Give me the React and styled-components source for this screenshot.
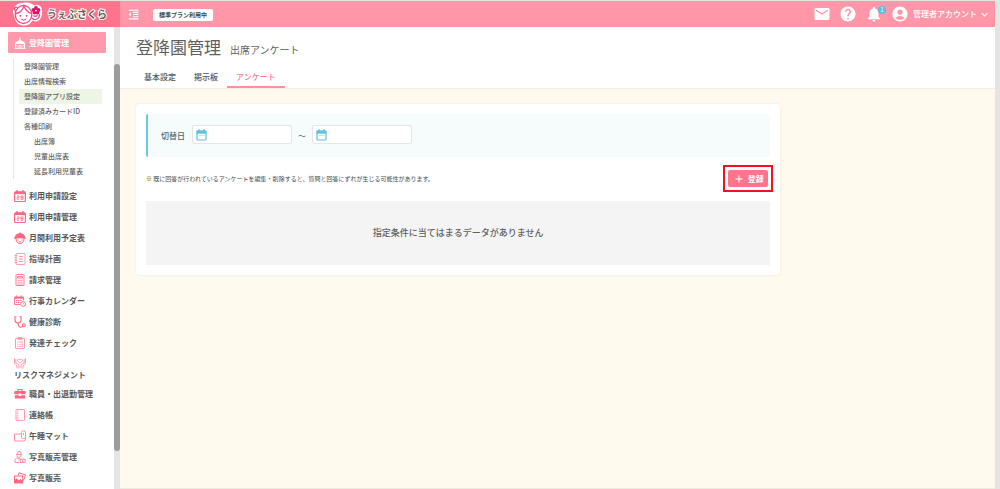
import React from "react";
import styled, { createGlobalStyle, css } from "styled-components";
import {
  MdEmail,
  MdHelp,
  MdNotifications,
  MdAccountCircle,
  MdExpandMore,
  MdFormatIndentDecrease,
  MdAdd,
} from "react-icons/md";

const GlobalStyle = createGlobalStyle`
  *, *::before, *::after { box-sizing: border-box; }
  body {
    margin: 0;
    background: #fffaed;
    color: #5f5f5f;
    font-family: "Noto Sans CJK JP", "Noto Sans", sans-serif;
    font-size: 8px;
    line-height: 12px;
  }
  button, input { font: inherit; color: inherit; }
  a { color: inherit; text-decoration: none; }
  ul { list-style: none; margin: 0; padding: 0; }
  svg { display: block; flex: none; }
`;

const Page = styled.div`
  display: grid;
  grid-template-columns: 120px minmax(0, 1fr);
  grid-template-rows: 26px minmax(0, 1fr);
  height: 100vh;
  border-top: 1px solid #e4e4e4;
  border-right: 5px solid #e4e4e4;
`;

const Brand = styled.a`
  display: flex;
  align-items: center;
  gap: 4px;
  padding-left: 12px;
  background: #ff748d;
`;

const BrandName = styled.span`
  position: relative;
  color: #6b5d5b;
  font-size: 10px;
  font-weight: 700;
  line-height: 16px;
  white-space: nowrap;
  -webkit-text-stroke: 2px #fff;
  paint-order: stroke fill;
`;

const Leaf = styled.span`
  position: absolute;
  top: 3px;
  left: 27px;
  width: 3px;
  height: 3px;
  border-radius: 3px 0;
  background: #8fd14a;
`;

const TopBar = styled.header`
  display: flex;
  align-items: center;
  padding: 0 4px 0 7px;
  background: #ff97a9;
  color: #fff;
`;

const IconButton = styled.button`
  position: relative;
  display: flex;
  padding: 0;
  border: 0;
  background: none;
  color: #fff;
`;

const PlanBadge = styled.span`
  width: 60px;
  margin: 1px 0 0 13px;
  border-radius: 2px;
  background: #fff;
  color: #444;
  font-size: 6px;
  font-weight: 700;
  text-align: center;
`;

const TopActions = styled.div`
  display: flex;
  align-items: center;
  gap: 8px;
  margin-left: auto;
`;

const Count = styled.span`
  position: absolute;
  top: 1px;
  right: -3px;
  width: 8px;
  height: 8px;
  border-radius: 50%;
  background: #55c1e2;
  font-size: 6px;
  line-height: 8px;
  text-align: center;
`;

const Account = styled(IconButton)`
  align-items: center;
  gap: 4px;
  font-weight: 500;
`;

const AccountLabel = styled.span`
  display: flex;
  align-items: center;
  gap: 1px;
`;

const Sidebar = styled.aside`
  display: flex;
  min-height: 0;
  background: #fff;
`;

const SideScroll = styled.nav`
  flex: 1;
  min-width: 0;
  overflow: hidden;
  padding: 5px 8px 0;
`;

const Track = styled.div`
  width: 6px;
  padding-top: 37px;
  background: #e5e5e5;
`;

const Thumb = styled.div`
  height: 91%;
  border-radius: 3px;
  background: #9c9c9c;
`;

const ActiveSection = styled.a`
  display: flex;
  align-items: center;
  gap: 3px;
  height: 21px;
  padding-left: 6px;
  border-radius: 1px;
  background: #ff9aac;
  color: #fff;
  font-weight: 700;
`;

const SubMenu = styled.ul`
  margin: 6px 4px 6px 5px;
  padding-left: 5px;
  border-left: 1px solid #e4e4e4;
`;

const SubLink = styled.a`
  display: block;
  padding-left: ${(p) => (p.$nested ? 15 : 5)}px;
  background: ${(p) => (p.$current ? "#eef5e4" : "transparent")};
  font-size: 7px;
  font-weight: 500;
  line-height: 15px;
  white-space: nowrap;
`;

const NavLink = styled.a`
  display: flex;
  align-items: center;
  gap: 3px;
  height: 21px;
  padding-left: 6px;
  color: #585858;
  font-weight: 700;
  white-space: nowrap;

  ${(p) =>
    p.$stacked &&
    css`
      flex-direction: column;
      align-items: flex-start;
      gap: 0;
      height: 30px;
      padding-top: 4px;
    `}
`;

const Main = styled.main`
  display: flex;
  flex-direction: column;
  min-width: 0;
`;

const PageHead = styled.div`
  padding: 8px 15px 0;
  border-bottom: 1px solid #f0ede6;
  background: #fff;
`;

const Titles = styled.div`
  display: flex;
  align-items: baseline;
  gap: 9px;
  padding-left: 1px;
`;

const Title = styled.h1`
  margin: 0;
  font-size: 17px;
  font-weight: 400;
  line-height: 24px;
`;

const Subtitle = styled.h2`
  margin: 0;
  font-size: 10px;
  font-weight: 400;
  line-height: 24px;
`;

const Tabs = styled.nav`
  display: flex;
  margin-top: 5px;
`;

const Tab = styled.a`
  padding: 4px 9px 3px;
  border-bottom: 2px solid ${(p) => (p.$current ? "#ff8fa2" : "transparent")};
  color: ${(p) => (p.$current ? "#ff7a92" : "#555")};
  font-weight: 500;
`;

const Content = styled.div`
  flex: 1;
  padding: 15px 0 0 16px;
  border-bottom: 1px solid #efebdf;
`;

const Card = styled.section`
  width: 75%;
  padding: 10px;
  border-radius: 3px;
  background: #fff;
  box-shadow: 0 0 2px rgba(90, 80, 50, 0.16);
`;

const Filter = styled.form`
  display: flex;
  align-items: center;
  height: 43px;
  padding: 0 13px 2px;
  border-left: 2px solid #6cc6de;
  border-radius: 2px;
  background: #f6fcfc;
  color: #4d6a70;
`;

const FilterLabel = styled.label`
  padding: 3px 7px 0 0;
  font-weight: 500;
`;

const Tilde = styled.span`
  padding: 3px 6px 0;
`;

const DateBox = styled.span`
  display: flex;
  align-items: center;
  gap: 4px;
  width: 100px;
  height: 19px;
  padding: 0 3px;
  border: 1px solid #e2e6e6;
  border-radius: 2px;
  background: #fff;
`;

const DateInput = styled.input`
  flex: 1;
  min-width: 0;
  padding: 0;
  border: 0;
  outline: 0;
  background: transparent;
`;

const ActionRow = styled.div`
  display: flex;
  align-items: center;
  justify-content: space-between;
  margin-right: -3px;
  padding: 8px 0 9px;
`;

const Note = styled.p`
  margin: 0;
  color: #4a4a4a;
  font-size: 6px;
`;

const Highlight = styled.div`
  padding: 3px;
  border: 2px solid #f5101c;
`;

const RegisterButton = styled.button`
  display: flex;
  align-items: center;
  justify-content: center;
  gap: 3px;
  width: 40px;
  height: 17px;
  padding: 0;
  border: 0;
  border-radius: 2px;
  background: #ff748d;
  color: #fff;
  font-weight: 700;
`;

const Empty = styled.p`
  margin: 0;
  padding: 26px 0;
  background: #f4f4f4;
  font-size: 9px;
  font-weight: 500;
  text-align: center;
`;

const PINK = "#ff6681";
const SOFT = "#ff8fa2";

function LogoMark() {
  return (
    <svg width="31" height="24" viewBox="0 0 31 24" aria-hidden="true">
      <path
        d="M11 1C5 1 2.500 4 2.500 6.500C.5 8 .5 11 2 13C3 20 6.500 23.500 11.500 23.500C16 23.500 19 21.500 20.500 18.500C25 21 29.500 18 30 12C31 5 27 1 22.500 3.500C19 1 15 0 11 1Z"
        fill="#fff"
      />
      <g fill="none" stroke="#ee4f8b" strokeWidth="1.300">
        <ellipse cx="11.500" cy="12.500" rx="8.300" ry="9" />
        <path d="M3.800 11.500C8 11 10.500 8.500 12 4C13.500 8.500 16 10.500 19.300 11.500" />
        <path d="M5.500 5.500C2.500 4 1.500 8 4 9" />
        <path d="M20 16C23 19.500 28 16.500 27.500 12M21 13.500Q23.500 15.500 25.500 13" />
      </g>
      <circle cx="8.300" cy="13.800" r=".9" fill="#e0357a" />
      <circle cx="14.700" cy="13.800" r=".9" fill="#e0357a" />
      <path d="M8.800 17Q11.500 19.500 14.200 17" fill="none" stroke="#e0357a" strokeWidth="1" />
      <g fill="#dc1463">
        <circle cx="24" cy="6" r="1.900" />
        <circle cx="26.500" cy="8" r="1.900" />
        <circle cx="25.500" cy="10.600" r="1.900" />
        <circle cx="22.500" cy="10.600" r="1.900" />
        <circle cx="21.500" cy="8" r="1.900" />
      </g>
      <circle cx="24" cy="8.700" r=".7" fill="#ffd2e0" />
    </svg>
  );
}

const drawings = {
  school: (
    <g fill="none" stroke="#fff" strokeWidth="1">
      <path d="M1.500 11V6.500H10.500V11M.5 11.300H11.500M5 11V8.500H7V11" />
      <path d="M.3 6.300L6 2.500L11.700 6.300Z" fill="#fff" stroke="none" />
      <path d="M6 .3V3M3 8V9.500M9 8V9.500" />
    </g>
  ),
  calendar28: (
    <g fill="none" stroke={PINK}>
      <rect x=".6" y="1.800" width="10.800" height="9.700" rx="1" strokeWidth="1.200" />
      <path d="M.6 3H11.400" strokeWidth="2.200" />
      <path d="M3 0V3M9 0V3" strokeWidth="1.400" />
      <path d="M3 6H5V7.600H3.300V9.300H5.300M7 6H9V9.300H7ZM7 7.600H9" strokeWidth=".8" />
    </g>
  ),
  child: (
    <g>
      <path d="M2 6.500C2 10 4 11.500 6 11.500S10 10 10 6.500" fill="#fff" stroke={PINK} strokeWidth="1" />
      <path d="M.2 7C.5 3.500 3 1.300 5 1.200L6 .2L7 1.200C9 1.300 11.500 3.500 11.800 7Q6 5.500 .2 7Z" fill={PINK} />
      <path d="M4 7.500V8.700M8 7.500V8.700M4.800 9.800H7.200" stroke={PINK} strokeWidth=".9" />
    </g>
  ),
  notebook: (
    <g fill="none" stroke={SOFT} strokeWidth=".9">
      <rect x="2" y=".5" width="9" height="11" rx="1" />
      <path d="M.5 2.500H3M.5 4.800H3M.5 7.200H3M.5 9.500H3M5 3.500H9M5 6H9M5 8.500H9" />
    </g>
  ),
  calculator: (
    <g fill="none" stroke={PINK} strokeWidth=".9">
      <rect x="2" y=".5" width="8" height="11" rx=".5" />
      <path d="M3.500 2.500H8.500V4H3.500Z" />
      <path d="M3.500 6.300H8.700M3.500 8.200H8.700M3.500 10H8.700" strokeDasharray="1.300 .6" />
    </g>
  ),
  calendarClock: (
    <g fill="none" stroke={PINK} strokeWidth=".9">
      <path d="M6.500 9.500H.6V2H9.500V5.500" />
      <path d="M.6 2.800H9.500" strokeWidth="1.800" />
      <path d="M2.700 .3V2M7.300 .3V2" />
      <path d="M2 5.500H8M2 7.500H6.500" strokeDasharray="1.400 .5" />
      <circle cx="9.200" cy="9" r="2.400" fill="#fff" />
      <path d="M9.200 7.600V9H10.300" strokeWidth=".7" />
    </g>
  ),
  stethoscope: (
    <g fill="none" stroke={PINK} strokeWidth="1.100">
      <path d="M2.500 .8H1V4C1 8 7 8 7 4V.8H5.500M4 7C4 12.500 9 12 8.500 9.500" />
      <circle cx="9.800" cy="9.200" r="1.500" />
    </g>
  ),
  checklist: (
    <g fill="none" stroke={SOFT} strokeWidth=".9">
      <rect x="1.500" y="1.500" width="9" height="10" rx=".5" />
      <path d="M4 .5H8V2.500H4ZM3.200 5H4.500M5.500 5H9M3.200 7.200H4.500M5.500 7.200H9M3.200 9.400H4.500M5.500 9.400H9" />
    </g>
  ),
  hands: (
    <g fill="none" stroke={SOFT} strokeWidth=".9">
      <path d="M6 6.300L3.700 4C3 2.500 5 1.500 6 3C7 1.500 9 2.500 8.300 4Z" />
      <path d="M.5 1.500V6L3 9V11.500M1.800 2V5.500L5 8V11.500M11.500 1.500V6L9 9V11.500M10.200 2V5.500L7 8V11.500" />
    </g>
  ),
  briefcase: (
    <g>
      <path d="M4 3V1.500H8V3" fill="none" stroke={PINK} strokeWidth="1.200" />
      <path d="M1 3H11Q11.700 3 11.700 4V6.300H7.200V5.500H4.800V6.300H.3V4Q.3 3 1 3ZM.8 7.200H4.800V8H7.200V7.200H11.200V10.500H.8Z" fill={PINK} />
    </g>
  ),
  book: (
    <g fill="none" stroke={SOFT} strokeWidth=".9">
      <rect x="2" y=".5" width="8.500" height="11" rx=".7" />
      <path d="M3.800 .5V11.500" strokeDasharray="1.200 .6" />
    </g>
  ),
  mat: (
    <g fill="none" stroke={SOFT} strokeWidth="1">
      <path d="M7.500 4H.5V11H9.500Q11.500 11 11.500 9V2.500Q11.500 .8 9.500 .8T7.500 2.500V7.500Q7.500 8.500 9.500 8.500T11.500 7.500" />
      <path d="M9.500 3V5" />
    </g>
  ),
  photographer: (
    <g fill="none" stroke={SOFT} strokeWidth="1">
      <path d="M2 3.500H8M3 3.300L4 .6H6.500L7.200 3.300M3 4V5.500Q5 7.500 7 5.500V4M1 11.500V8.500Q2 6.800 4 7L5 8.500L6.500 7M1 11.500H5" />
      <rect x="6.300" y="8.300" width="4.800" height="3.200" />
      <circle cx="8.700" cy="9.900" r=".6" />
    </g>
  ),
  photos: (
    <g fill="none" stroke={PINK} strokeWidth="1">
      <path d="M4 3.500L5 .8L11.500 3L9.500 8.500" />
      <rect x=".5" y="4" width="8.200" height="7" fill="#fff" />
      <path d="M1 10.500V8.500L3 6.800L5 8.800L6.500 7.500L8.500 9.500V10.500Z" fill={PINK} />
    </g>
  ),
};

function NavIcon({ name }) {
  return (
    <svg width="12" height="12" viewBox="0 0 12 12" aria-hidden="true">
      {drawings[name]}
    </svg>
  );
}

function DateIcon() {
  return (
    <svg width="11" height="12" viewBox="0 0 11 12" aria-hidden="true">
      <path d="M3 .3V3M8 .3V3" stroke="#62c2dc" strokeWidth="1.500" />
      <rect x="1" y="2" width="9" height="9" rx="1" fill="#fff" stroke="#62c2dc" strokeWidth="1.200" />
      <path d="M.5 3.200H10.500" stroke="#62c2dc" strokeWidth="3" />
      <path d="M2.500 6.500H8.500" stroke="#a6dcea" strokeWidth=".7" />
    </svg>
  );
}

const subItems = [
  { label: "登降園管理" },
  { label: "出席情報検索" },
  { label: "登降園アプリ設定", current: true },
  { label: "登録済みカードID" },
  { label: "各種印刷" },
  { label: "出席簿", nested: true },
  { label: "児童出席表", nested: true },
  { label: "延長利用児童表", nested: true },
];

const navItems = [
  { label: "利用申請設定", icon: "calendar28" },
  { label: "利用申請管理", icon: "calendar28" },
  { label: "月間利用予定表", icon: "child" },
  { label: "指導計画", icon: "notebook" },
  { label: "請求管理", icon: "calculator" },
  { label: "行事カレンダー", icon: "calendarClock" },
  { label: "健康診断", icon: "stethoscope" },
  { label: "発達チェック", icon: "checklist" },
  { label: "リスクマネジメント", icon: "hands", stacked: true },
  { label: "職員・出退勤管理", icon: "briefcase" },
  { label: "連絡帳", icon: "book" },
  { label: "午睡マット", icon: "mat" },
  { label: "写真販売管理", icon: "photographer" },
  { label: "写真販売", icon: "photos" },
];

function DateField({ id, label }) {
  return (
    <DateBox>
      <DateIcon />
      <DateInput id={id} type="text" aria-label={label} />
    </DateBox>
  );
}

export default function App() {
  return (
    <>
      <GlobalStyle />
      <Page>
        <Brand href="#">
          <LogoMark />
          <BrandName>
            うぇぶさくら
            <Leaf />
          </BrandName>
        </Brand>
        <TopBar>
          <IconButton type="button" aria-label="メニューを閉じる">
            <MdFormatIndentDecrease size={13} />
          </IconButton>
          <PlanBadge>標準プラン利用中</PlanBadge>
          <TopActions>
            <IconButton type="button" aria-label="メール">
              <MdEmail size={18} />
            </IconButton>
            <IconButton type="button" aria-label="ヘルプ">
              <MdHelp size={18} />
            </IconButton>
            <IconButton type="button" aria-label="お知らせ">
              <MdNotifications size={18} />
              <Count>1</Count>
            </IconButton>
            <Account type="button">
              <MdAccountCircle size={18} />
              <AccountLabel>
                管理者アカウント
                <MdExpandMore size={13} />
              </AccountLabel>
            </Account>
          </TopActions>
        </TopBar>

        <Sidebar>
          <SideScroll>
            <ActiveSection href="#">
              <NavIcon name="school" />
              登降園管理
            </ActiveSection>
            <SubMenu>
              {subItems.map((item) => (
                <li key={item.label}>
                  <SubLink href="#" $nested={item.nested} $current={item.current}>
                    {item.label}
                  </SubLink>
                </li>
              ))}
            </SubMenu>
            <ul>
              {navItems.map((item) => (
                <li key={item.label}>
                  <NavLink href="#" $stacked={item.stacked}>
                    <NavIcon name={item.icon} />
                    {item.label}
                  </NavLink>
                </li>
              ))}
            </ul>
          </SideScroll>
          <Track>
            <Thumb />
          </Track>
        </Sidebar>

        <Main>
          <PageHead>
            <Titles>
              <Title>登降園管理</Title>
              <Subtitle>出席アンケート</Subtitle>
            </Titles>
            <Tabs>
              <Tab href="#">基本設定</Tab>
              <Tab href="#">掲示板</Tab>
              <Tab href="#" $current>
                アンケート
              </Tab>
            </Tabs>
          </PageHead>
          <Content>
            <Card>
              <Filter>
                <FilterLabel htmlFor="date-from">切替日</FilterLabel>
                <DateField id="date-from" label="切替日 開始" />
                <Tilde>～</Tilde>
                <DateField id="date-to" label="切替日 終了" />
              </Filter>
              <ActionRow>
                <Note>
                  ※ 既に回答が行われているアンケートを編集・削除すると、質問と回答にずれが生じる可能性があります。
                </Note>
                <Highlight>
                  <RegisterButton type="button">
                    <MdAdd size={12} />
                    登録
                  </RegisterButton>
                </Highlight>
              </ActionRow>
              <Empty>指定条件に当てはまるデータがありません</Empty>
            </Card>
          </Content>
        </Main>
      </Page>
    </>
  );
}
